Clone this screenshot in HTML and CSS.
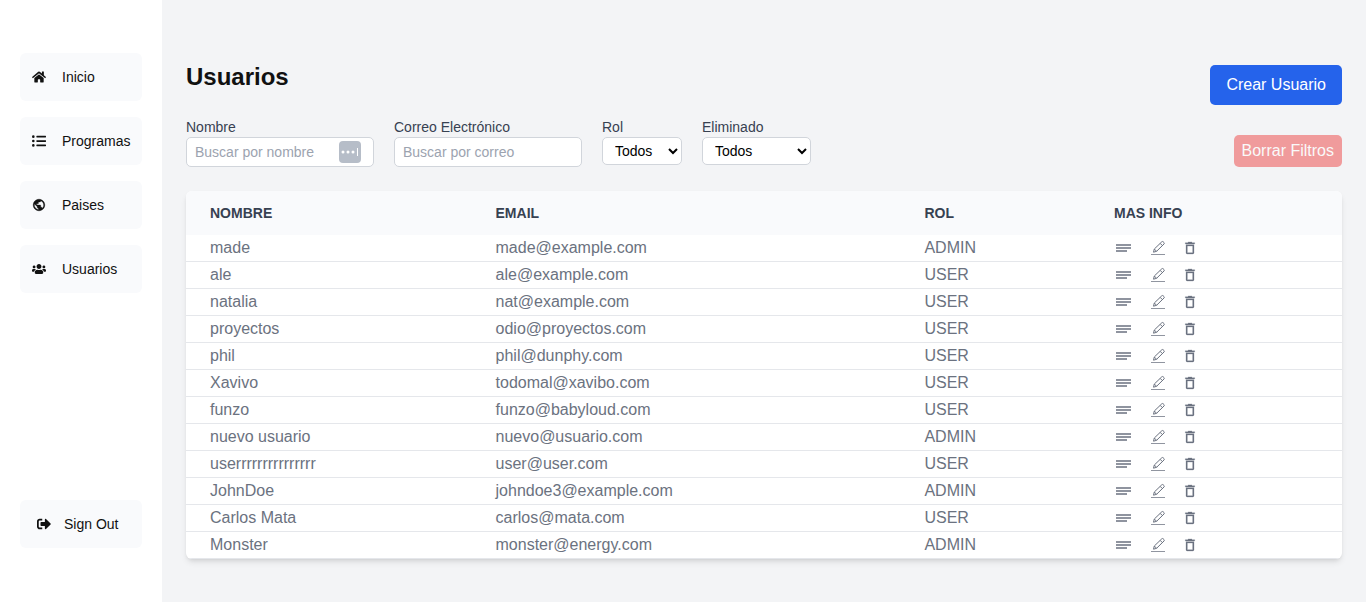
FILE: index.html
```html
<!DOCTYPE html>
<html lang="es">
<head>
<meta charset="utf-8">
<meta name="viewport" content="width=device-width, initial-scale=1">
<title>Usuarios</title>
<link rel="stylesheet" href="styles.css">
</head>
<body>
<svg class="sprite" aria-hidden="true">
  <symbol id="lines" viewBox="0 0 16 16"><path d="M0 5h15M0 8h15M0 11h11" fill="none" stroke="currentColor" stroke-width="1.600"/></symbol>
  <symbol id="edit" viewBox="0 0 16 16"><path d="M2 14.500h14" fill="none" stroke="currentColor" stroke-width="1" opacity=".75"/><path d="M4.500 12.200l.8-3.200 7.500-7.200a1 1 0 0 1 1.400 0l.8.8a1 1 0 0 1 0 1.400l-7.400 7.300zM11.200 3.400l2.200 2.200M5.300 9l2.300 2.300" fill="none" stroke="currentColor" stroke-width="1" stroke-linejoin="round"/></symbol>
  <symbol id="trash" viewBox="0 0 24 24"><path fill="currentColor" stroke="currentColor" stroke-width=".4" d="M6 19c0 1.100.9 2 2 2h8c1.100 0 2-.9 2-2V7H6v12zM8 9h8v10H8V9zm7.500-5l-1-1h-5l-1 1H5v2h14V4h-3.500z"/></symbol>
</svg>
<div class="layout">
  <aside class="sidebar">
    <nav class="menu">
      <a class="item" href="#inicio"><svg class="icon" viewBox="0 0 576 512"><path d="M280.370 148.260L96 300.110V464a16 16 0 0 0 16 16l112.060-.29a16 16 0 0 0 15.920-16V368a16 16 0 0 1 16-16h64a16 16 0 0 1 16 16v95.640a16 16 0 0 0 16 16.050L464 480a16 16 0 0 0 16-16V300L295.670 148.260a12.190 12.190 0 0 0-15.300 0zM571.600 251.470L488 182.560V44.050a12 12 0 0 0-12-12h-56a12 12 0 0 0-12 12v72.610L318.470 43a48 48 0 0 0-61 0L4.340 251.470a12 12 0 0 0-1.600 16.900l25.500 31A12 12 0 0 0 45.150 301l235.220-193.740a12.190 12.190 0 0 1 15.300 0L530.900 301a12 12 0 0 0 16.900-1.600l25.500-31a12 12 0 0 0-1.700-16.930z"/></svg>Inicio</a>
      <a class="item" href="#programas"><svg class="icon" viewBox="0 0 512 512"><path d="M48 48a48 48 0 1 0 48 48 48 48 0 0 0-48-48zm0 160a48 48 0 1 0 48 48 48 48 0 0 0-48-48zm0 160a48 48 0 1 0 48 48 48 48 0 0 0-48-48zm448 16H176a16 16 0 0 0-16 16v32a16 16 0 0 0 16 16h320a16 16 0 0 0 16-16v-32a16 16 0 0 0-16-16zm0-320H176a16 16 0 0 0-16 16v32a16 16 0 0 0 16 16h320a16 16 0 0 0 16-16V80a16 16 0 0 0-16-16zm0 160H176a16 16 0 0 0-16 16v32a16 16 0 0 0 16 16h320a16 16 0 0 0 16-16v-32a16 16 0 0 0-16-16z"/></svg>Programas</a>
      <a class="item" href="#paises"><svg class="icon" viewBox="0 0 24 24"><path d="M12 2C6.480 2 2 6.480 2 12s4.480 10 10 10 10-4.480 10-10S17.520 2 12 2zm-1 17.930c-3.950-.49-7-3.850-7-7.930 0-.62.08-1.210.21-1.790L9 15v1c0 1.100.9 2 2 2v1.930zm6.900-2.540c-.26-.81-1-1.390-1.900-1.390h-1v-3c0-.55-.45-1-1-1H8v-2h2c.55 0 1-.45 1-1V7h2c1.100 0 2-.9 2-2v-.41c2.930 1.190 5 4.060 5 7.410 0 2.080-.8 3.970-2.100 5.390z" stroke="currentColor" stroke-width=".6"/></svg>Paises</a>
      <a class="item" href="#usuarios"><svg class="icon" viewBox="0 0 640 512"><path d="M96 224c35.300 0 64-28.700 64-64s-28.700-64-64-64-64 28.700-64 64 28.700 64 64 64zm448 0c35.300 0 64-28.700 64-64s-28.700-64-64-64-64 28.700-64 64 28.700 64 64 64zm32 32h-64c-17.600 0-33.500 7.100-45.100 18.600 40.300 22.100 68.900 62 75.100 109.400h66c17.700 0 32-14.300 32-32v-32c0-35.300-28.700-64-64-64zm-256 0c61.900 0 112-50.100 112-112S381.900 32 320 32 208 82.100 208 144s50.100 112 112 112zm76.800 32h-8.300c-20.800 10-43.900 16-68.500 16s-47.600-6-68.500-16h-8.300C179.600 288 128 339.600 128 403.200V432c0 26.500 21.500 48 48 48h288c26.500 0 48-21.500 48-48v-28.800c0-63.600-51.600-115.200-115.200-115.200zm-223.700-13.400C161.500 263.100 145.600 256 128 256H64c-35.300 0-64 28.700-64 64v32c0 17.700 14.300 32 32 32h65.900c6.300-47.400 34.900-87.300 75.200-109.400z"/></svg>Usuarios</a>
    </nav>
    <button class="item signout" type="button"><svg class="icon" viewBox="0 0 512 512"><path d="M497 273L329 441c-15 15-41 4.500-41-17v-96H152c-13.300 0-24-10.700-24-24v-96c0-13.300 10.700-24 24-24h136V88c0-21.400 25.900-32 41-17l168 168c9.300 9.400 9.300 24.600 0 34zM192 436v-40c0-6.600-5.400-12-12-12H96c-17.700 0-32-14.300-32-32V160c0-17.700 14.300-32 32-32h84c6.600 0 12-5.400 12-12V76c0-6.600-5.400-12-12-12H96c-53 0-96 43-96 96v192c0 53 43 96 96 96h84c6.600 0 12-5.400 12-12z"/></svg>Sign Out</button>
  </aside>
  <main class="content">
    <header class="heading">
      <h1 class="title">Usuarios</h1>
      <button class="create" type="button">Crear Usuario</button>
    </header>
    <form class="filters">
      <div class="field">
        <label for="nombre">Nombre</label>
        <div class="box">
          <input class="text" id="nombre" type="text" placeholder="Buscar por nombre">
          <svg class="autofill" viewBox="0 0 22 22" aria-hidden="true"><rect width="22" height="22" rx="4" fill="#b6bdc8"/><circle cx="4" cy="11" r="1.500" fill="#fff"/><circle cx="9" cy="11" r="1.500" fill="#fff"/><circle cx="14" cy="11" r="1.500" fill="#fff"/><path d="M18.500 7v8" stroke="#fff"/></svg>
        </div>
      </div>
      <div class="field">
        <label for="correo">Correo Electrónico</label>
        <input class="text" id="correo" type="text" placeholder="Buscar por correo">
      </div>
      <div class="field">
        <label for="rol">Rol</label>
        <select class="select" id="rol"><option>Todos</option><option>ADMIN</option><option>USER</option></select>
      </div>
      <div class="field">
        <label for="eliminado">Eliminado</label>
        <select class="select wide" id="eliminado"><option>Todos</option><option>Eliminado</option></select>
      </div>
      <button class="clear" type="reset" disabled>Borrar Filtros</button>
    </form>
    <div class="card">
      <table class="users">
        <colgroup><col class="col-name"><col class="col-email"><col class="col-role"><col></colgroup>
        <thead><tr><th>NOMBRE</th><th>EMAIL</th><th>ROL</th><th>MAS INFO</th></tr></thead>
        <tbody id="rows"></tbody>
      </table>
    </div>
  </main>
</div>
<script src="users.js"></script>
</body>
</html>
```

FILE: styles.css
```css
*, *::before, *::after { box-sizing: border-box; }
body { margin: 0; font-family: "Liberation Sans", Arial, sans-serif; font-size: 16px; line-height: 24px; color: #111; background: #f3f4f6; }
button, input, select { font: inherit; color: inherit; margin: 0; }
button { border: 0; cursor: pointer; }
.sprite { display: none; }

.layout { display: flex; min-height: 100vh; }
.sidebar { flex: none; display: flex; flex-direction: column; justify-content: space-between; width: 162px; padding: 53px 20px 54px; background: #fff; }
.menu { display: flex; flex-direction: column; gap: 16px; }
.item { display: flex; align-items: center; gap: 16px; height: 48px; padding: 0 12px; border-radius: 6px; background: #f9fafc; color: #111; font-size: 14px; line-height: 20px; text-decoration: none; }
.icon { flex: none; width: 14px; height: 14px; fill: currentColor; }
.signout { gap: 13px; padding: 0 17px; }
.menu .item { white-space: nowrap; }
.item:hover { background: #f3f4f6; }

.content { flex: 1; min-width: 0; padding: 65px 24px 43px; }
.heading { display: flex; justify-content: space-between; align-items: flex-start; }
.title { margin: 0; font-size: 24px; line-height: 24px; font-weight: 700; }
.create { padding: 8px 16px; border-radius: 5px; background: #2563eb; color: #fff; }

.filters { display: flex; flex-wrap: wrap; gap: 20px; margin-top: 12px; font-size: 14px; line-height: 20px; }
.field { display: flex; flex-direction: column; }
.field label { color: #374151; }
.box { position: relative; display: flex; }
.text { width: 188px; height: 30px; padding: 4px 8px; border: 1px solid #d1d5db; border-radius: 5px; background: #fff; }
.text::placeholder { color: #9ca3af; opacity: 1; }
.autofill { position: absolute; top: 4px; right: 13px; width: 22px; height: 22px; }
.select { width: 80px; height: 28px; padding: 0 0 0 8px; border: 1px solid #d1d5db; border-radius: 5px; background: #fff; color: #000; }
.wide { width: 109px; }
.clear { align-self: flex-start; margin: 18px 0 0 auto; padding: 4px 8px; border-radius: 5px; background: #ef4444; color: #fff; font-size: 16px; line-height: 24px; opacity: .5; cursor: default; }

.card { margin-top: 24px; border-radius: 6px; overflow: hidden; background: #fff; box-shadow: 0 4px 6px -1px rgb(0 0 0 / .1), 0 2px 4px -2px rgb(0 0 0 / .1); }
.users { width: 100%; table-layout: fixed; border-collapse: separate; border-spacing: 0; color: #6b7280; }
.col-name { width: 24.7%; }
.col-email { width: 37.1%; }
.col-role { width: 16.4%; }
.users th { padding: 12px 24px; background: #f9fafc; color: #374151; font-size: 14px; line-height: 20px; font-weight: 700; text-align: left; }
.users td { height: 27px; padding: 0 24px; border-bottom: 1px solid #e5e7eb; }
.actions { display: flex; align-items: center; gap: 17px; padding-left: 2px; }
.action { display: flex; padding: 0; background: none; color: #6b7280; }
.action svg { width: 16px; height: 16px; }
```

FILE: users.js
```
const users = [
  ["made", "made@example.com", "ADMIN"],
  ["ale", "ale@example.com", "USER"],
  ["natalia", "nat@example.com", "USER"],
  ["proyectos", "odio@proyectos.com", "USER"],
  ["phil", "phil@dunphy.com", "USER"],
  ["Xavivo", "todomal@xavibo.com", "USER"],
  ["funzo", "funzo@babyloud.com", "USER"],
  ["nuevo usuario", "nuevo@usuario.com", "ADMIN"],
  ["userrrrrrrrrrrrrrr", "user@user.com", "USER"],
  ["JohnDoe", "johndoe3@example.com", "ADMIN"],
  ["Carlos Mata", "carlos@mata.com", "USER"],
  ["Monster", "monster@energy.com", "ADMIN"]
];
const action = (icon, label) =>
  `<button class="action" type="button" aria-label="${label}"><svg><use href="#${icon}"/></svg></button>`;
document.getElementById("rows").innerHTML = users.map(([name, email, role]) =>
  `<tr><td>${name}</td><td>${email}</td><td>${role}</td><td><div class="actions">${action("lines", "Detalles")}${action("edit", "Editar")}${action("trash", "Eliminar")}</div></td></tr>`
).join("");
```
